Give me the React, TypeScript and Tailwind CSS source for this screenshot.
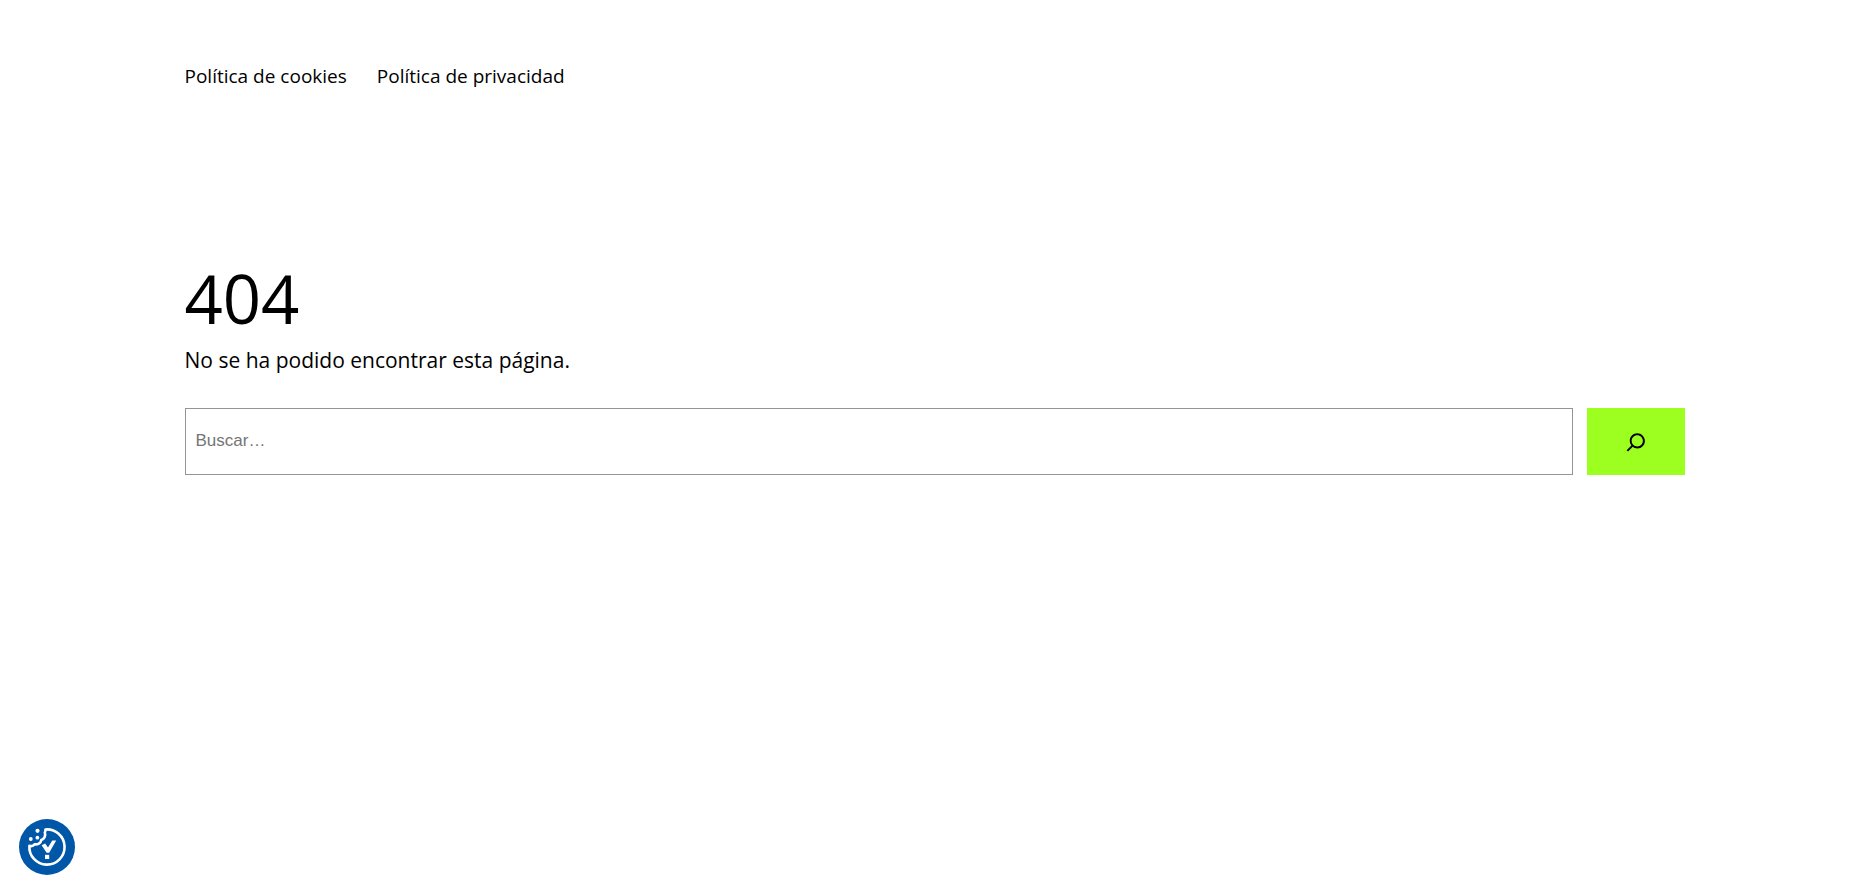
function SearchIcon() {
  return (
    <svg viewBox="0 0 24 24" className="size-[30px]" fill="currentColor" aria-hidden="true">
      <path d="M13 5c-3.3 0-6 2.7-6 6 0 1.4.5 2.7 1.3 3.7l-3.8 3.8 1.1 1.1 3.8-3.8c1 .8 2.3 1.3 3.7 1.3 3.3 0 6-2.7 6-6S16.3 5 13 5zm0 10.5c-2.5 0-4.5-2-4.5-4.5s2-4.5 4.5-4.5 4.5 2 4.5 4.5-2 4.5-4.5 4.5z" />
    </svg>
  );
}

function CookieIcon() {
  return (
    <svg viewBox="0 0 56 56" className="size-14" fill="none" aria-hidden="true">
      <path
        d="M26.4 10.5A17.6 17.6 0 1 1 10.4 26.8C12.2 27.4 14.4 26.9 15.6 25.3C18.4 25.8 22 24.4 22.2 21C25.2 20 27 16.6 25.8 13.6C26.3 12.6 26.5 11.5 26.4 10.5Z"
        stroke="#fff"
        strokeWidth="2.6"
        strokeLinejoin="round"
      />
      <circle cx="18.5" cy="11.8" r="2.1" fill="#fff" />
      <circle cx="11.8" cy="20" r="1.9" fill="#fff" />
      <circle cx="18.4" cy="18.7" r="1.9" fill="#fff" />
      <path d="M22.6 26.2L26.2 24.4L29 28.4L33.2 21.6H37.2L30.2 33.8H27.6Z" fill="#fff" />
      <path d="M26 35.8h4.2v4.2H26z" fill="#fff" />
    </svg>
  );
}

export default function App() {
  return (
    <div className="min-h-screen bg-white px-8 font-['Open_Sans','Noto_Sans',sans-serif] text-black">
      <div className="mx-auto max-w-[1500px]">
        <header className="pt-[60px]">
          <nav aria-label="Principal" className="flex flex-wrap gap-[30px] text-[19px] leading-8">
            <a href="#cookies">Política de cookies</a>
            <a href="#privacidad">Política de privacidad</a>
          </nav>
        </header>
        <main className="pt-[164px]">
          <h1 className="text-[67px] leading-[84px]">404</h1>
          <p className="text-[21px] leading-10">No se ha podido encontrar esta página.</p>
          <form role="search" className="flex gap-[14px] pt-7" onSubmit={(e) => e.preventDefault()}>
            <input
              type="search"
              aria-label="Buscar"
              placeholder="Buscar…"
              className="h-[67px] min-w-0 flex-1 border border-[#949494] px-[10px] pb-[2px] font-['Liberation_Sans',sans-serif] text-[17px] placeholder:text-[#757575]"
            />
            <button
              type="submit"
              aria-label="Buscar"
              className="flex h-[67px] w-[98px] items-center justify-center bg-[#9dff20]"
            >
              <SearchIcon />
            </button>
          </form>
        </main>
      </div>
      <button
        type="button"
        aria-label="Preferencias de cookies"
        className="fixed bottom-[19px] left-[19px] rounded-full bg-[#0056a7]"
      >
        <CookieIcon />
      </button>
    </div>
  );
}
